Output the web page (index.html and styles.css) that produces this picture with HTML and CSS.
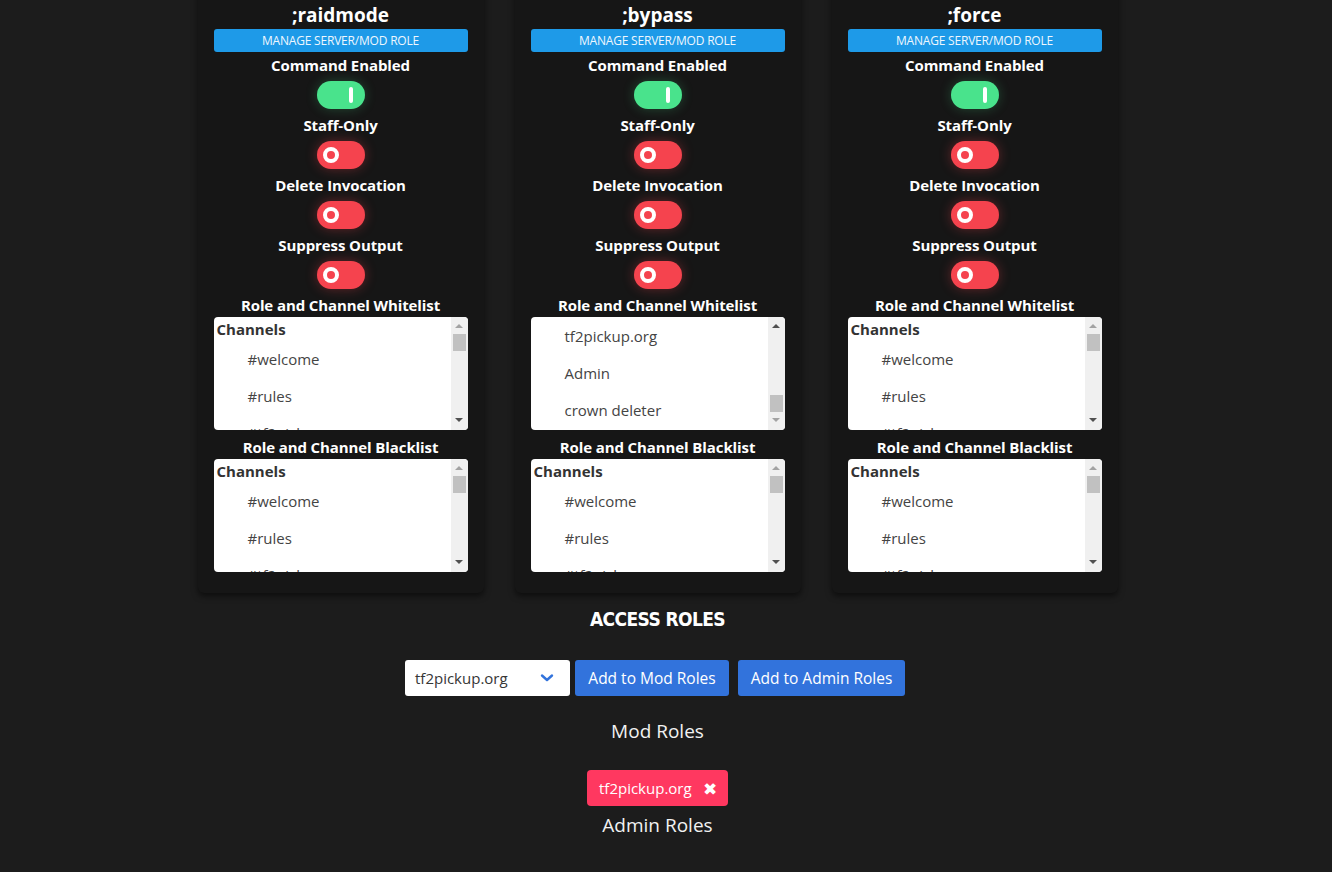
FILE: index.html
```html
<!DOCTYPE html>
<html>
<head>
<meta charset="utf-8">
<link rel="stylesheet" href="styles.css">
</head>
<body>
<main class="page">
  <div class="cards">
    <section class="card">
      <h2 class="cmd">;raidmode</h2>
      <div class="manage">MANAGE SERVER/MOD ROLE</div>
      <div class="label first">Command Enabled</div>
      <div class="toggle on"><span class="bar"></span></div>
      <div class="label">Staff-Only</div>
      <div class="toggle off"><span class="knob"></span></div>
      <div class="label">Delete Invocation</div>
      <div class="toggle off"><span class="knob"></span></div>
      <div class="label">Suppress Output</div>
      <div class="toggle off"><span class="knob"></span></div>
      <div class="label">Role and Channel Whitelist</div>
      <div class="listbox">
        <div class="list-items">
          <div class="group">Channels</div>
          <div class="opt">#welcome</div>
          <div class="opt">#rules</div>
          <div class="opt">#tf2pickup</div>
        </div>
        <div class="sb"><span class="arr up dis"></span><div class="track"><span class="thumb"></span></div><span class="arr down"></span></div>
      </div>
      <div class="label lb">Role and Channel Blacklist</div>
      <div class="listbox">
        <div class="list-items">
          <div class="group">Channels</div>
          <div class="opt">#welcome</div>
          <div class="opt">#rules</div>
          <div class="opt">#tf2pickup</div>
        </div>
        <div class="sb"><span class="arr up dis"></span><div class="track"><span class="thumb"></span></div><span class="arr down"></span></div>
      </div>
    </section>
    <section class="card">
      <h2 class="cmd">;bypass</h2>
      <div class="manage">MANAGE SERVER/MOD ROLE</div>
      <div class="label first">Command Enabled</div>
      <div class="toggle on"><span class="bar"></span></div>
      <div class="label">Staff-Only</div>
      <div class="toggle off"><span class="knob"></span></div>
      <div class="label">Delete Invocation</div>
      <div class="toggle off"><span class="knob"></span></div>
      <div class="label">Suppress Output</div>
      <div class="toggle off"><span class="knob"></span></div>
      <div class="label">Role and Channel Whitelist</div>
      <div class="listbox">
        <div class="list-items scrolled">
          <div class="opt">tf2pickup.org</div>
          <div class="opt">Admin</div>
          <div class="opt">crown deleter</div>
        </div>
        <div class="sb"><span class="arr up"></span><div class="track end"><span class="thumb"></span></div><span class="arr down dis"></span></div>
      </div>
      <div class="label lb">Role and Channel Blacklist</div>
      <div class="listbox">
        <div class="list-items">
          <div class="group">Channels</div>
          <div class="opt">#welcome</div>
          <div class="opt">#rules</div>
          <div class="opt">#tf2pickup</div>
        </div>
        <div class="sb"><span class="arr up dis"></span><div class="track"><span class="thumb"></span></div><span class="arr down"></span></div>
      </div>
    </section>
    <section class="card">
      <h2 class="cmd">;force</h2>
      <div class="manage">MANAGE SERVER/MOD ROLE</div>
      <div class="label first">Command Enabled</div>
      <div class="toggle on"><span class="bar"></span></div>
      <div class="label">Staff-Only</div>
      <div class="toggle off"><span class="knob"></span></div>
      <div class="label">Delete Invocation</div>
      <div class="toggle off"><span class="knob"></span></div>
      <div class="label">Suppress Output</div>
      <div class="toggle off"><span class="knob"></span></div>
      <div class="label">Role and Channel Whitelist</div>
      <div class="listbox">
        <div class="list-items">
          <div class="group">Channels</div>
          <div class="opt">#welcome</div>
          <div class="opt">#rules</div>
          <div class="opt">#tf2pickup</div>
        </div>
        <div class="sb"><span class="arr up dis"></span><div class="track"><span class="thumb"></span></div><span class="arr down"></span></div>
      </div>
      <div class="label lb">Role and Channel Blacklist</div>
      <div class="listbox">
        <div class="list-items">
          <div class="group">Channels</div>
          <div class="opt">#welcome</div>
          <div class="opt">#rules</div>
          <div class="opt">#tf2pickup</div>
        </div>
        <div class="sb"><span class="arr up dis"></span><div class="track"><span class="thumb"></span></div><span class="arr down"></span></div>
      </div>
    </section>
  </div>

  <h3 class="access">ACCESS ROLES</h3>
  <div class="controls">
    <div class="select">
      <span>tf2pickup.org</span>
      <svg class="chev" width="14" height="10" viewBox="0 0 14 10"><path d="M2 2.5 L7 7 L12 2.5" fill="none" stroke="#3273dc" stroke-width="2.4" stroke-linecap="round" stroke-linejoin="round"/></svg>
    </div>
    <button class="btn mod">Add to Mod Roles</button>
    <button class="btn admin">Add to Admin Roles</button>
  </div>
  <div class="roles-title mod-title">Mod Roles</div>
  <div class="tag">tf2pickup.org <span class="x">✖</span></div>
  <div class="roles-title admin-title">Admin Roles</div>
</main>
</body>
</html>
```

FILE: styles.css
```css
* { box-sizing: border-box; }
html, body { margin: 0; padding: 0; }
body {
  background: #1c1c1c;
  font-family: "Open Sans", "Noto Sans", sans-serif;
  color: #fff;
  height: 872px;
  overflow: hidden;
}
.page {
  width: 1315px;
  display: flex;
  flex-direction: column;
  align-items: center;
}
.cards {
  display: flex;
  gap: 31px;
  margin-top: -20px;
}
.card {
  width: 286px;
  background: #161616;
  border-radius: 6px;
  box-shadow: 0 3px 6px rgba(0,0,0,0.55);
  padding: 23px 16px 21px;
  display: flex;
  flex-direction: column;
  align-items: center;
}
.cmd {
  margin: 0;
  font-size: 19px;
  line-height: 24px;
  font-weight: 700;
}
.manage {
  margin-top: 2px;
  width: 254px;
  height: 23px;
  border-radius: 3px;
  background: #1e9ae8;
  color: #eef7fe;
  font-size: 12px;
  line-height: 23px;
  text-align: center;
  letter-spacing: -0.2px;
}
.label {
  margin-top: 6px;
  font-size: 15px;
  line-height: 20px;
  font-weight: 700;
  letter-spacing: -0.1px;
}
.label.first { margin-top: 3px; }
.label.lb { margin-top: 7px; }
.toggle {
  margin-top: 6px;
  width: 48px;
  height: 28px;
  border-radius: 14px;
  display: flex;
  align-items: center;
}
.toggle.on {
  background: #49e38c;
  box-shadow: 0 0 12px rgba(73,227,140,0.25);
  justify-content: flex-end;
  padding-right: 12px;
}
.toggle.off {
  background: #f5434e;
  box-shadow: 0 0 12px rgba(245,67,78,0.35);
  padding-left: 6px;
}
.bar {
  width: 4px;
  height: 16px;
  border-radius: 2px;
  background: #fff;
}
.knob {
  width: 16px;
  height: 16px;
  border-radius: 50%;
  border: 4px solid #fff;
  background: #f5434e;
}
.listbox {
  margin-top: 2px;
  width: 254px;
  height: 113px;
  background: #fff;
  border-radius: 4px;
  overflow: hidden;
  display: flex;
  color: #444;
}
.list-items {
  flex: 1;
  overflow: hidden;
  font-size: 15px;
}
.list-items.scrolled { padding-top: 1px; }
.group {
  height: 24px;
  line-height: 24px;
  padding-left: 3px;
  font-weight: 700;
  color: #333;
}
.opt {
  height: 37px;
  line-height: 37px;
  padding-left: 34px;
}
.sb {
  width: 17px;
  background: #f0f0f0;
  display: flex;
  flex-direction: column;
  align-items: center;
}
.arr {
  width: 0;
  height: 0;
  border-left: 4px solid transparent;
  border-right: 4px solid transparent;
  flex: none;
}
.arr.up { border-bottom: 4px solid #505050; margin-top: 7px; }
.arr.down { border-top: 4px solid #505050; margin-bottom: 8px; }
.arr.dis.up { border-bottom-color: #a3a3a3; }
.arr.dis.down { border-top-color: #a3a3a3; }
.track {
  flex: 1;
  width: 100%;
  display: flex;
  flex-direction: column;
  align-items: center;
  padding: 6px 0;
}
.track.end { justify-content: flex-end; }
.thumb {
  width: 13px;
  height: 17px;
  background: #c1c1c1;
}
.access {
  margin: 14px 0 0;
  font-family: "DejaVu Sans Condensed", "DejaVu Sans", sans-serif;
  font-stretch: condensed;
  font-weight: 700;
  font-size: 19px;
  line-height: 24px;
  letter-spacing: -0.6px;
}
.controls {
  margin-top: 29px;
  margin-right: 5px;
  display: flex;
}
.select {
  width: 165px;
  height: 36px;
  background: #fff;
  border-radius: 3px;
  color: #363636;
  font-size: 15px;
  display: flex;
  align-items: center;
  justify-content: space-between;
  padding: 0 16px 0 10px;
}
.btn {
  height: 36px;
  border: none;
  border-radius: 3px;
  background: #3273dc;
  color: #fff;
  font-family: inherit;
  font-size: 15.5px;
  padding: 0 10px;
}
.btn.mod { margin-left: 5px; width: 154px; }
.btn.admin { margin-left: 9px; width: 167px; }
.roles-title {
  font-size: 19px;
  line-height: 24px;
  color: #f2f2f2;
}
.mod-title { margin-top: 23px; }
.tag {
  margin-top: 27px;
  height: 36px;
  width: 141px;
  border-radius: 4px;
  background: #ff3860;
  color: #fff;
  font-size: 15px;
  display: flex;
  align-items: center;
  padding-left: 12px;
}
.tag .x { margin-left: 11px; font-size: 17px; }
.admin-title { margin-top: 7px; }
```
